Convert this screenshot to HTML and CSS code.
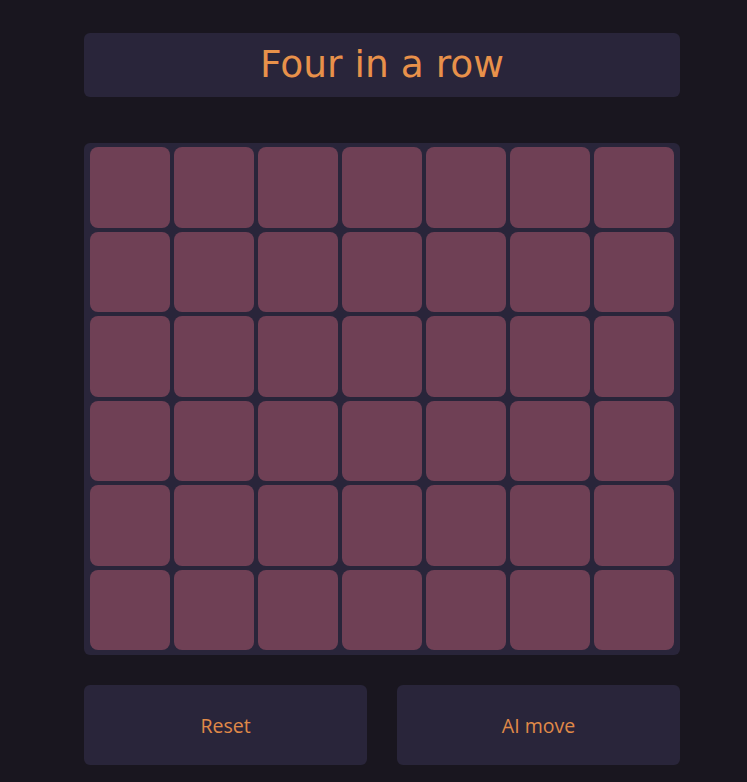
FILE: index.html
```html
<!DOCTYPE html>
<html>
<head>
<meta charset="utf-8">
<link rel="stylesheet" href="styles.css">
</head>
<body>
<div class="app">
  <div class="title"><h1>Four in a row</h1></div>
  <div class="board">
    <div class="cell"></div><div class="cell"></div><div class="cell"></div><div class="cell"></div><div class="cell"></div><div class="cell"></div><div class="cell"></div>
    <div class="cell"></div><div class="cell"></div><div class="cell"></div><div class="cell"></div><div class="cell"></div><div class="cell"></div><div class="cell"></div>
    <div class="cell"></div><div class="cell"></div><div class="cell"></div><div class="cell"></div><div class="cell"></div><div class="cell"></div><div class="cell"></div>
    <div class="cell"></div><div class="cell"></div><div class="cell"></div><div class="cell"></div><div class="cell"></div><div class="cell"></div><div class="cell"></div>
    <div class="cell"></div><div class="cell"></div><div class="cell"></div><div class="cell"></div><div class="cell"></div><div class="cell"></div><div class="cell"></div>
    <div class="cell"></div><div class="cell"></div><div class="cell"></div><div class="cell"></div><div class="cell"></div><div class="cell"></div><div class="cell"></div>
  </div>
  <div class="controls">
    <button class="btn">Reset</button>
    <button class="btn">AI move</button>
  </div>
</div>
</body>
</html>
```
FILE: styles.css
```css
html, body {
  margin: 0;
  padding: 0;
  background: #19161f;
  height: 100%;
}
.app {
  width: 596px;
  padding: 33px 0 0 84px;
  display: flex;
  flex-direction: column;
}
.title {
  height: 64px;
  background: #29253a;
  border-radius: 6px;
  display: flex;
  align-items: center;
  justify-content: center;
}
.title h1 {
  margin: 0;
  font-family: "DejaVu Sans", sans-serif;
  font-weight: normal;
  font-size: 37.6px;
  color: #e8914a;
  line-height: 1;
}
.board {
  margin-top: 46px;
  height: 512px;
  box-sizing: border-box;
  padding: 4px 6px 5px;
  background: #29253a;
  border-radius: 6px;
  display: grid;
  grid-template-columns: repeat(7, 1fr);
  grid-template-rows: repeat(6, 1fr);
  gap: 4px;
}
.cell {
  background: #6f4055;
  border-radius: 8px;
}
.controls {
  margin-top: 30px;
  display: flex;
  gap: 30px;
}
.btn {
  flex: 1;
  height: 80px;
  border: none;
  border-radius: 6px;
  background: #29253a;
  color: #e08a48;
  font-family: "Open Sans", sans-serif;
  font-size: 19.5px;
  padding: 0;
}
```
